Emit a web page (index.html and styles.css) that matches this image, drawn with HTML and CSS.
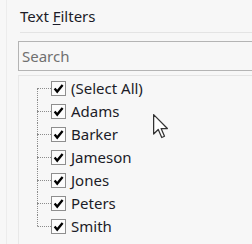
FILE: index.html
```html
<!DOCTYPE html>
<html lang="en">
<head>
    <meta charset="UTF-8">
    <title>Text Filters</title>
    <link rel="stylesheet" href="styles.css">
</head>
<body>
    <div class="dialog">
        <div class="title">Text <u>F</u>ilters</div>
        <input class="search" type="text" placeholder="Search">
        <div class="list">
            <div class="row first">
                <span class="branch"><span class="up"></span><span class="down"></span></span>
                <span class="check"><svg viewBox="0 0 13 13" width="13" height="13"><path d="M2.6 6.6 L5.2 9.6 L10.6 3" /></svg></span>
                <span class="label">(Select All)</span>
            </div>
            <div class="row">
                <span class="branch"><span class="up"></span><span class="down"></span></span>
                <span class="check"><svg viewBox="0 0 13 13" width="13" height="13"><path d="M2.6 6.6 L5.2 9.6 L10.6 3" /></svg></span>
                <span class="label">Adams</span>
            </div>
            <div class="row">
                <span class="branch"><span class="up"></span><span class="down"></span></span>
                <span class="check"><svg viewBox="0 0 13 13" width="13" height="13"><path d="M2.6 6.6 L5.2 9.6 L10.6 3" /></svg></span>
                <span class="label">Barker</span>
            </div>
            <div class="row">
                <span class="branch"><span class="up"></span><span class="down"></span></span>
                <span class="check"><svg viewBox="0 0 13 13" width="13" height="13"><path d="M2.6 6.6 L5.2 9.6 L10.6 3" /></svg></span>
                <span class="label">Jameson</span>
            </div>
            <div class="row">
                <span class="branch"><span class="up"></span><span class="down"></span></span>
                <span class="check"><svg viewBox="0 0 13 13" width="13" height="13"><path d="M2.6 6.6 L5.2 9.6 L10.6 3" /></svg></span>
                <span class="label">Jones</span>
            </div>
            <div class="row">
                <span class="branch"><span class="up"></span><span class="down"></span></span>
                <span class="check"><svg viewBox="0 0 13 13" width="13" height="13"><path d="M2.6 6.6 L5.2 9.6 L10.6 3" /></svg></span>
                <span class="label">Peters</span>
            </div>
            <div class="row last">
                <span class="branch"><span class="up"></span><span class="down"></span></span>
                <span class="check"><svg viewBox="0 0 13 13" width="13" height="13"><path d="M2.6 6.6 L5.2 9.6 L10.6 3" /></svg></span>
                <span class="label">Smith</span>
            </div>
        </div>
    </div>

    <!-- mouse pointer over the list -->
    <svg class="cursor" viewBox="0 0 12 20" width="15" height="25">
        <path d="M0.5 0.5 L0.5 16 L4.2 12.4 L7 18.8 L9.2 17.8 L6.5 11.6 L11.5 11.6 Z" />
    </svg>
</body>
</html>
```

FILE: styles.css
```css
html, body {
    margin: 0;
    height: 100%;
    overflow: hidden;
}

body {
    background-color: #f7f7f7;
    font-family: "Noto Sans", "Open Sans", sans-serif;
    font-size: 15px;
    color: #1c1c28;
}

.dialog {
    margin-left: 6px;
    height: 100%;
    border-left: 1px solid #ececec;
    display: flex;
    flex-direction: column;
}

.title {
    margin-left: 13px;
    height: 32px;
    line-height: 32px;
    border-bottom: 1px solid #e4e4e4;
}

.title u {
    text-decoration-thickness: 1px;
    text-underline-offset: 2px;
}

/* box runs on past the right edge, so no right border */
.search {
    margin: 8px 0 0 11px;
    height: 30px;
    box-sizing: border-box;
    border: 1px solid #b4b4b4;
    border-right: none;
    background: #f7f7f7;
    padding: 0 3px;
    font-family: inherit;
    font-size: 15px;
    color: #1c1c28;
    outline: none;
}

.search::placeholder {
    color: #707070;
}

.list {
    margin: 4px 0 0 11px;
    flex: 1;
    border-top: 1px solid #e4e4e4;
    border-left: 1px solid #e8e8e8;
    padding-top: 1px;
}

.row {
    height: 23px;
    display: flex;
    align-items: center;
}

.branch {
    margin-left: 18px;
    width: 14px;
    height: 23px;
    display: flex;
    flex-direction: column;
    box-sizing: border-box;
}

.branch .up {
    height: 11px;
    border-left: 1px dotted #8c8c8c;
}

.branch .down {
    flex: 1;
    border-left: 1px dotted #8c8c8c;
    border-top: 1px dotted #8c8c8c;
}

.first .branch .up {
    border-left-color: transparent;
}

.last .branch .down {
    border-left-color: transparent;
}

.check {
    width: 15px;
    height: 15px;
    box-sizing: border-box;
    border: 1px solid #8e8e8e;
    background: #fcfcfc;
    display: flex;
}

.check path {
    fill: none;
    stroke: #000;
    stroke-width: 2.3;
}

.label {
    margin-left: 5px;
    margin-top: -2px;
    white-space: nowrap;
}

.cursor {
    position: absolute;
    left: 153px;
    top: 114px;
}

.cursor path {
    fill: #fff;
    stroke: #333;
    stroke-width: 1;
    stroke-linejoin: round;
}
```
